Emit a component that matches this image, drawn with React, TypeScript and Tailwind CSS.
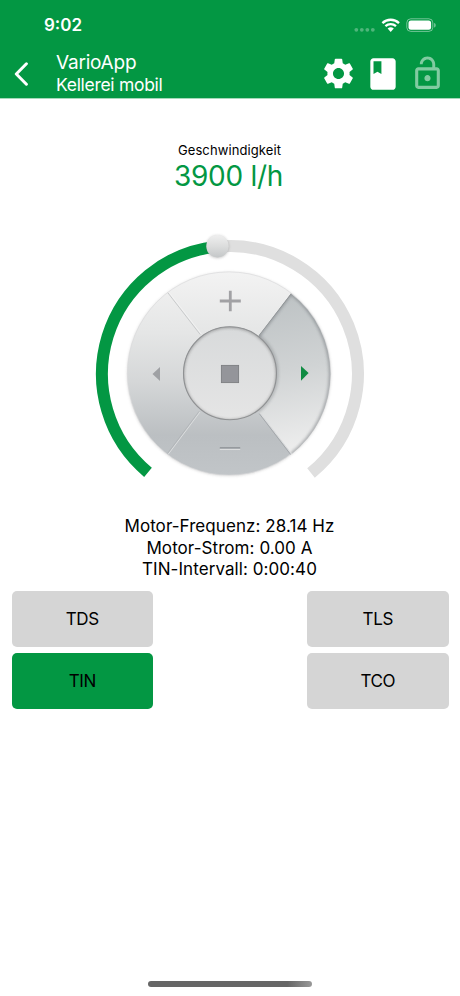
import React from "react";

const modes = [
  { label: "TDS", active: false },
  { label: "TLS", active: false },
  { label: "TIN", active: true },
  { label: "TCO", active: false },
];

function StatusBar() {
  return (
    <div className="flex h-[50px] items-center justify-between pl-[44px] pr-[24px] text-white">
      <span className="text-[17px] font-semibold leading-5 tracking-[0px]">9:02</span>
      <svg className="h-[20px] w-[82px]" viewBox="0 0 82 20" fill="none">
        <g fill="#fff" fillOpacity=".3">
          <circle cx="2.3" cy="14.8" r="1.9" />
          <circle cx="7.8" cy="14.8" r="1.9" />
          <circle cx="13.3" cy="14.8" r="1.9" />
          <circle cx="18.8" cy="14.8" r="1.9" />
        </g>
        <g stroke="#fff" strokeWidth="2.3">
          <path d="M28.4 8.1a12 12 0 0 1 16.6 0" />
          <path d="M31.4 11.2a7.8 7.8 0 0 1 10.6 0" />
        </g>
        <path d="M33.6 13.6a4.6 4.6 0 0 1 6.2 0L36.7 16.9z" fill="#fff" />
        <rect x="52.8" y="3.8" width="26" height="12.6" rx="4" stroke="#fff" strokeOpacity=".45" />
        <rect x="54.5" y="5.4" width="22.6" height="9.4" rx="2.5" fill="#fff" />
        <path d="M80.2 8c1.9.6 1.9 3.9 0 4.5z" fill="#fff" fillOpacity=".5" />
      </svg>
    </div>
  );
}

function Header() {
  return (
    <header className="h-[99px] border-b border-[#a5dab9] bg-[#039743] text-white">
      <StatusBar />
      <div className="flex h-[47px] items-center pl-[14px] pr-[14px]">
        <svg className="h-[24px] w-[15px]" viewBox="0 0 15 24" fill="none" stroke="#fff" strokeWidth="3" strokeLinecap="round" strokeLinejoin="round">
          <path d="M12.4 1.8 2.3 12 12.4 22.2" />
        </svg>
        <div className="ml-[27px] flex-1 whitespace-nowrap">
          <div className="-mt-px text-[19px] leading-[23px] tracking-[-0.2px]">VarioApp</div>
          <div className="text-[17.5px] leading-[22px] tracking-[-0.3px]">Kellerei mobil</div>
        </div>
        <div className="flex items-center">
          <svg className="h-[37px] w-[37px]" viewBox="0 0 24 24" fill="#fff">
            <path d="M19.14 12.94c.04-.3.06-.61.06-.94s-.02-.64-.07-.94l2.03-1.58c.18-.14.23-.41.12-.61l-1.92-3.32c-.12-.22-.37-.29-.59-.22l-2.39.96c-.5-.38-1.03-.7-1.62-.94l-.36-2.54c-.04-.24-.24-.41-.48-.41h-3.84c-.24 0-.43.17-.47.41l-.36 2.54c-.59.24-1.13.57-1.62.94l-2.39-.96c-.22-.08-.47 0-.59.22L2.74 8.87c-.12.21-.08.47.12.61l2.03 1.58c-.05.3-.09.63-.09.94s.02.64.07.94l-2.03 1.58c-.18.14-.23.41-.12.61l1.92 3.32c.12.22.37.29.59.22l2.39-.96c.5.38 1.03.7 1.62.94l.36 2.54c.05.24.24.41.48.41h3.84c.24 0 .44-.17.47-.41l.36-2.54c.59-.24 1.13-.56 1.62-.94l2.39.96c.22.08.47 0 .59-.22l1.92-3.32c.12-.22.07-.47-.12-.61l-2.01-1.58zM12 15.6c-1.98 0-3.6-1.62-3.6-3.6s1.62-3.6 3.6-3.6 3.6 1.62 3.6 3.6-1.62 3.6-3.6 3.6z" />
          </svg>
          <svg className="ml-[7px] h-[38px] w-[38px]" viewBox="0 0 24 24" fill="#fff">
            <path d="M18 2H6c-1.1 0-2 .9-2 2v16c0 1.1.9 2 2 2h12c1.1 0 2-.9 2-2V4c0-1.1-.9-2-2-2zM6 4h5v8l-2.5-1.5L6 12V4z" />
          </svg>
          <svg className="ml-[7px] h-[37px] w-[37px]" viewBox="0 0 24 24" fill="#fff" opacity=".5">
            <path d="M12 17c1.1 0 2-.9 2-2s-.9-2-2-2-2 .9-2 2 .9 2 2 2zm6-9h-1V6c0-2.76-2.24-5-5-5S7 3.24 7 6h1.9c0-1.71 1.39-3.1 3.1-3.1 1.71 0 3.1 1.39 3.1 3.1v2H6c-1.1 0-2 .9-2 2v10c0 1.1.9 2 2 2h12c1.1 0 2-.9 2-2V10c0-1.1-.9-2-2-2zm0 12H6V10h12v10z" />
          </svg>
        </div>
      </div>
    </header>
  );
}

function Dial() {
  return (
    <svg className="block h-[260px] w-[280px]" viewBox="90 230 280 260" fill="none">
      <defs>
        <linearGradient id="disc" x1="0" y1="271" x2="0" y2="476" gradientUnits="userSpaceOnUse">
          <stop offset="0" stopColor="#f3f3f3" />
          <stop offset=".3" stopColor="#e5e6e6" />
          <stop offset=".55" stopColor="#d4d6d7" />
          <stop offset=".8" stopColor="#bbbfc2" />
          <stop offset="1" stopColor="#c1c5c8" />
        </linearGradient>
        <linearGradient id="pressed" x1="275" y1="295" x2="305" y2="450" gradientUnits="userSpaceOnUse">
          <stop offset="0" stopColor="#bdc2c4" />
          <stop offset=".48" stopColor="#d0d3d4" />
          <stop offset="1" stopColor="#eeeeee" />
        </linearGradient>
        <linearGradient id="hub" x1="0" y1="327" x2="0" y2="420" gradientUnits="userSpaceOnUse">
          <stop offset="0" stopColor="#d8dadb" />
          <stop offset="1" stopColor="#e5e5e5" />
        </linearGradient>
        <linearGradient id="knob" x1="0" y1="0" x2="0" y2="1">
          <stop offset="0" stopColor="#efefef" />
          <stop offset=".5" stopColor="#dcdddd" />
          <stop offset="1" stopColor="#c4c7c8" />
        </linearGradient>
        <filter id="soft" x="-20%" y="-20%" width="140%" height="140%">
          <feGaussianBlur stdDeviation="1.4" />
        </filter>
        <clipPath id="sector">
          <path d="M291 293.4A102 102 0 0 1 291.5 454.2L229.7 373.5Z" />
        </clipPath>
        <clipPath id="hubClip">
          <circle cx="230" cy="373.3" r="46.8" />
        </clipPath>
      </defs>

      <path d="M217.5 246.6A128 128 0 0 1 311 473" stroke="#dfdfdf" strokeWidth="12" />
      <path d="M148 472.3A128 128 0 0 1 217.5 246.6" stroke="#039743" strokeWidth="12" />

      <circle cx="229" cy="374" r="101.6" fill="#777" opacity=".35" filter="url(#soft)" />
      <circle cx="229" cy="373.5" r="101.6" fill="url(#disc)" stroke="#d8d9da" strokeWidth=".6" />

      <g clipPath="url(#sector)">
        <rect x="225" y="280" width="115" height="185" fill="url(#pressed)" />
        <path d="M230 373.5 291 293.4A102 102 0 0 1 291.5 454.2" stroke="#72777b" strokeWidth="3" opacity=".6" filter="url(#soft)" />
        <circle cx="230" cy="373.3" r="47.2" stroke="#777b7e" strokeWidth="2" opacity=".55" filter="url(#soft)" />
        <path d="M291 293.4 259 335" stroke="#85898b" strokeWidth="1.2" />
      </g>

      <path d="M167.8 292.7 200.2 334.5" stroke="#c8cacb" />
      <path d="M169 292.2 201.2 333.8" stroke="#f4f4f4" strokeWidth=".8" />
      <path d="M168.3 454.2 200 412" stroke="#dcdedf" strokeWidth="1" />
      <path d="M167.4 453.5 199.2 411.2" stroke="#a9adb0" strokeWidth=".6" />
      <path d="M260 413 291.5 454" stroke="#d9dbdc" strokeWidth="1.2" />
      <path d="M259.3 413.7 290.7 454.6" stroke="#9da1a4" strokeWidth=".8" />

      <circle cx="230" cy="373.3" r="46.8" fill="url(#hub)" />
      <g clipPath="url(#hubClip)">
        <circle cx="230" cy="373.8" r="47.2" stroke="#666" strokeWidth="2.5" opacity=".65" filter="url(#soft)" />
      </g>
      <circle cx="230" cy="373.3" r="46.5" stroke="#8f9193" strokeWidth="1.1" />

      <path d="M219.8 301h21M230.3 290.7v20.6" stroke="#a1a1a4" strokeWidth="2.8" />
      <path d="M219.8 447.9h20.4" stroke="#94989c" strokeWidth="1.7" />
      <path d="M219.8 449.4h20.4" stroke="#dedfe0" strokeWidth="1.1" />
      <path d="M152.5 373.9 160 367v14z" fill="#9fa1a4" />
      <path d="M308.6 373.1 301 366v14.8z" fill="#108c43" />
      <rect x="221.4" y="365.4" width="17.2" height="17.2" fill="#94959a" stroke="#7d7e82" strokeWidth=".9" />

      <circle cx="217.5" cy="246.8" r="11" fill="#555" opacity=".4" filter="url(#soft)" />
      <circle cx="217.5" cy="246.2" r="11.2" fill="url(#knob)" />
    </svg>
  );
}

export default function App() {
  return (
    <div className="flex h-[996px] w-[460px] flex-col overflow-hidden bg-white font-['Inter','Liberation_Sans',sans-serif] text-black">
      <Header />
      <main className="flex flex-1 flex-col items-center">
        <div className="mt-[43px] pr-px text-[13px] leading-4 tracking-[0.1px]">Geschwindigkeit</div>
        <div className="mt-[1px] pr-[3px] text-[28px] leading-[34px] tracking-[-0.3px] text-[#039743]">3900 l/h</div>
        <div className="mt-[37px]">
          <Dial />
        </div>
        <div className="mt-[26px] pr-px text-center text-[17px] leading-[21.5px] tracking-[0.07px]">
          <div>Motor-Frequenz: 28.14 Hz</div>
          <div>Motor-Strom: 0.00 A</div>
          <div>TIN-Intervall: 0:00:40</div>
        </div>
        <div className="mt-[10.5px] grid w-full grid-cols-[141.5px_141.5px] justify-between gap-y-[6.5px] px-[11.5px]">
          {modes.map(({ label, active }) => (
            <button
              key={label}
              className={`h-[55.5px] rounded-[5px] text-[17px] leading-5 tracking-[-0.4px] ${active ? "bg-[#039743]" : "bg-[#d5d5d5]"}`}
            >
              {label}
            </button>
          ))}
        </div>
        <div className="mb-[9px] mt-auto h-[6px] w-[164px] rounded-full bg-gradient-to-r from-[#666] from-85% to-[#999]" />
      </main>
    </div>
  );
}
